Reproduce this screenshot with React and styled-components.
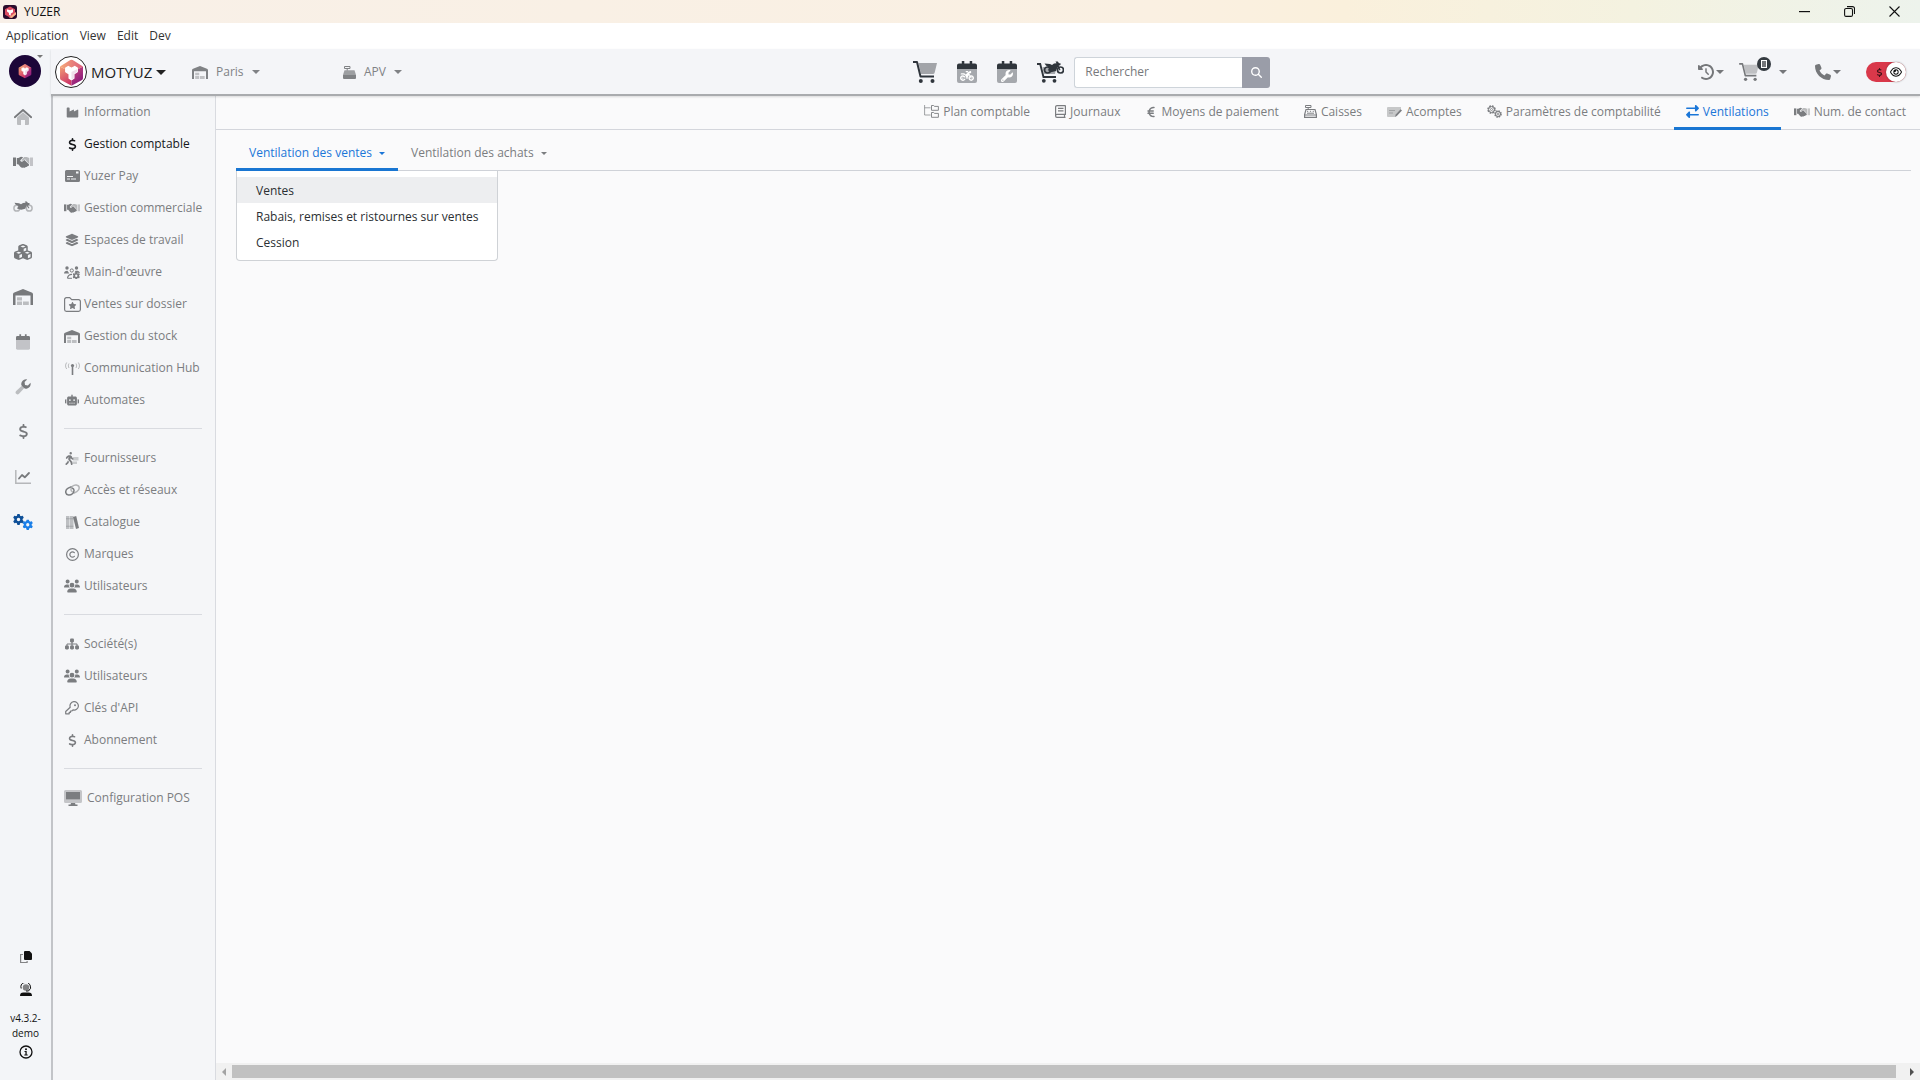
import React, { useState } from "react";
import styled, { createGlobalStyle, css } from "styled-components";
import {
  FaCubes, FaDollarSign, FaGear, FaIndustry, FaLayerGroup, FaRobot, FaRegCopyright,
  FaSitemap, FaEuroSign, FaRightLeft, FaClockRotateLeft, FaPhone, FaMotorcycle,
  FaWrench, FaMagnifyingGlass, FaUsers, FaPersonWalking, FaStar, FaRegEye,
} from "react-icons/fa6";

const BLUE = "#1976d2";
const GREY = "#7b7d80";

const Global = createGlobalStyle`
  *, *::before, *::after { box-sizing: border-box; }
  body {
    margin: 0;
    background: #fafafb;
    color: #212529;
    font-family: "Open Sans", "Noto Sans", sans-serif;
    font-size: 12px;
    line-height: 20px;
  }
  button, input { font: inherit; color: inherit; }
  button { border: 0; padding: 0; background: none; cursor: pointer; }
  a { color: inherit; text-decoration: none; }
  ul { list-style: none; margin: 0; padding: 0; }
  svg { display: block; flex: none; }
`;

/* ---------- drawings ---------- */

const Svg = ({ w, h = w, box = `0 0 ${w} ${h}`, children }) => (
  <svg width={w} height={h} viewBox={box} fill="currentColor" aria-hidden="true">{children}</svg>
);

const Hex = ({ size, id }) => (
  <svg width={size} height={size} viewBox="0 0 24 24" aria-hidden="true">
    <defs>
      <linearGradient id={`${id}Left`} x1="0" y1="0" x2="0.400" y2="1">
        <stop offset="0" stopColor="#f3a073" />
        <stop offset="1" stopColor="#cf3a68" />
      </linearGradient>
      <linearGradient id={`${id}Right`} x1="0" y1="0" x2="0.600" y2="1">
        <stop offset="0" stopColor="#d44f7c" />
        <stop offset="1" stopColor="#86187c" />
      </linearGradient>
      <linearGradient id={`${id}Top`} x1="0" y1="0" x2="1" y2="0">
        <stop offset="0" stopColor="#f5a878" />
        <stop offset="1" stopColor="#dd5f7c" />
      </linearGradient>
    </defs>
    <path d="M2.500 7 12 12v11L3.300 18.200a1.600 1.600 0 0 1-.8-1.400z" fill={`url(#${id}Left)`} />
    <path d="M21.500 7 12 12v11l8.700-4.800a1.600 1.600 0 0 0 .8-1.400z" fill={`url(#${id}Right)`} />
    <path d="M2.500 7 11 1.700a2 2 0 0 1 2 0L21.500 7 12 12.200z" fill={`url(#${id}Top)`} />
    <path d="M7.200 8.200 9.300 7l2.700 1.500L14.700 7l2.100 1.200v3.200L14 13.200v3.600L12 18l-2-1.200v-3.600l-2.800-1.800z" fill="#fff" stroke="#fff" strokeLinejoin="round" />
    <path d="M12 11.500V18l2-1.200v-3.600l2.800-1.800V9z" fill="#f0e0ea" />
  </svg>
);

const AppLogo = () => (
  <svg width="14" height="14" viewBox="0 0 14 14" aria-hidden="true">
    <rect width="14" height="14" rx="3" fill="#2a0c2c" />
    <path d="M7 1.500 12 4.300v5.400l-5 2.800-5-2.800V4.300z" fill="#dc4c62" />
    <path d="M4 4.200 7 5.200l3-1v3L7.800 8.500v2.200L6 9.800V8L4 6.600z" fill="#fff" />
    <path d="M6 12.500 13 7v2.500L9 13z" fill="#f6b08a" />
  </svg>
);

const Home = () => (
  <Svg w={18} h={16}>
    <path d="M3 8.500 9 3.300l6 5.200V15a1 1 0 0 1-1 1h-3v-5H7v5H4a1 1 0 0 1-1-1z" opacity=".45" />
    <path d="M.8 8.200 9 1l8.200 7.200" fill="none" stroke="currentColor" strokeWidth="1.800" strokeLinecap="round" strokeLinejoin="round" />
  </Svg>
);

const Handshake = ({ w = 20 }) => (
  <Svg w={w} h={Math.round(w * 0.6)} box="0 0 20 12">
    <path d="M0 1.500h3V10H0z" />
    <path d="M17 1.500h3V10h-3z" opacity=".4" />
    <path d="M3.800 2h1.500L8 .7l2.200.6-2.900 3c-.2 1.200 1.700 2 3 .6l1.200-1 4.300 4.300c.7 1-.2 2-1.100 1.900-.4.900-1.300 1.200-2 .8-.7 1-1.800 1-2.500.6-1 .6-1.900.2-2.600-.4L5.200 8.200H3.800z" />
    <path d="M8.500 4 11.300 1l2.400.1 2.600.8v6.300L12 3.200l-1.800 1.500c-.900.4-1.900 0-1.700-.7z" opacity=".5" />
  </Svg>
);

const Moto = () => (
  <Svg w={20} h={11}>
    <g fill="none" stroke="currentColor" strokeWidth="1.500" opacity=".5">
      <circle cx="3.800" cy="7.200" r="2.900" />
      <circle cx="16.200" cy="7.200" r="2.900" />
    </g>
    <path d="M1.500 1.800 6 2.300l2 1 2-1.300 2.600-.3-.8-1.200h2l1.200 1.500h1.500v1.800l-1.800.6L16.500 7l-.9.500-2-3-1.400 3.300-4 1L4 7.500 5.500 5 2.500 3.600z" />
  </Svg>
);

const Warehouse = ({ w = 20 }) => (
  <Svg w={w} h={Math.round(w * 0.8)} box="0 0 20 16">
    <path d="M0 16V5.300C0 4.400.5 3.700 1.300 3.400L10 0l8.700 3.400c.8.300 1.300 1 1.300 1.900V16h-2.500V6.500h-15V16z" />
    <path d="M4 8.200h5v3.300H4zM4 12.500h5V16H4zM10 12.500h5.800V16H10z" opacity=".45" />
  </Svg>
);

const Calendar = ({ w = 14, h = 16, children }) => (
  <Svg w={w} h={h} box="0 0 20 22">
    <path d="M0 8h20v12a2 2 0 0 1-2 2H2a2 2 0 0 1-2-2z" opacity=".4" />
    <path d="M2 2.500h2.800V0h2.500v2.500h5.400V0h2.500v2.500H18a2 2 0 0 1 2 2V8H0V4.500a2 2 0 0 1 2-2z" />
    {children}
  </Svg>
);

const Wrench = () => (
  <Svg w={16}>
    <path d="M7.400 6.200 9.800 8.600 4 14.800a1.900 1.900 0 0 1-2.800-2.800z" opacity=".45" />
    <path d="M15.500 3.800 12.900 6.400 10 6 9.600 3.100 12.200.5A4.800 4.800 0 0 0 6.400 6.300L9.700 9.600a4.800 4.800 0 0 0 5.800-5.800z" />
  </Svg>
);

const Chart = () => (
  <Svg w={16} h={14}>
    <path d="M.800 0v13.200H16" fill="none" stroke="currentColor" strokeWidth="1.500" opacity=".5" />
    <path d="m4 8.500 3-3.500 2.800 2.300L14 3" fill="none" stroke="currentColor" strokeWidth="1.800" strokeLinecap="round" strokeLinejoin="round" />
  </Svg>
);

const Gears = () => (
  <svg width="20" height="16" viewBox="0 0 20 16" aria-hidden="true">
    <FaGear x="0" y="0" size="11" color="#0d4f98" />
    <FaGear x="9.500" y="5.500" size="10.500" color="#1a7fe8" />
  </svg>
);

const GearsLine = () => (
  <Svg w={15} h={13}>
    <g fill="none" stroke="currentColor">
      <circle cx="4.500" cy="4.500" r="3.400" strokeWidth="1.800" strokeDasharray="1.700 .97" />
      <circle cx="4.500" cy="4.500" r="2.900" />
      <circle cx="4.500" cy="4.500" r="1" strokeWidth=".8" />
      <circle cx="11" cy="9" r="3" strokeWidth="1.600" strokeDasharray="1.500 .86" />
      <circle cx="11" cy="9" r="2.500" />
      <circle cx="11" cy="9" r=".9" strokeWidth=".8" />
    </g>
  </Svg>
);

const Card = () => (
  <Svg w={15} h={12}>
    <path fillRule="evenodd" d="M1.500 0h12A1.500 1.500 0 0 1 15 1.500v9a1.500 1.500 0 0 1-1.500 1.500h-12A1.500 1.500 0 0 1 0 10.500v-9A1.500 1.500 0 0 1 1.500 0zM11 1.500v2h2.500v-2zM2 6v1h6V6zm0 2.500v1h3v-1zm4 0v1h5v-1z" />
  </Svg>
);

const Staff = () => (
  <Svg w={16} h={13}>
    <circle cx="3" cy="2" r="1.700" /><circle cx="12.500" cy="2" r="1.700" />
    <circle cx="7.800" cy="4.500" r="1.600" fill="none" stroke="currentColor" />
    <path d="M0 7.500C.2 5.300 1.500 4.600 3.500 4.700L5.300 7.500zM10.500 6.500l1-1.700c2-.3 4 .2 4.500 2.200z" />
    <path d="M3.500 12.300c.3-3 1.500-4 4.500-4" fill="none" stroke="currentColor" strokeWidth="1.200" />
    <path d="M3.500 12.300H8" stroke="currentColor" />
    <FaGear x="8.500" y="6" size="7.500" />
  </Svg>
);

const FolderStar = () => (
  <Svg w={17} h={15}>
    <path d="M.6 12.500v-10A1.800 1.800 0 0 1 2.400.700h3.300l2 2h6.900a1.800 1.800 0 0 1 1.800 1.800v8a1.800 1.800 0 0 1-1.800 1.800H2.400a1.800 1.800 0 0 1-1.800-1.800z" fill="none" stroke="currentColor" strokeWidth="1.200" />
    <FaStar x="4.500" y="4.500" size="8" />
  </Svg>
);

const Antenna = () => (
  <Svg w={15} h={13}>
    <g fill="none" stroke="currentColor" opacity=".5">
      <path d="M1.700.5C.2 2.500.2 5 1.700 7M13.300.5c1.500 2 1.500 4.500 0 6.500M4 1.500c-.8 1.500-.8 3 0 4.500M11 1.500c.8 1.500.8 3 0 4.500" />
    </g>
    <circle cx="7.500" cy="3.500" r="1.600" /><path d="M6.700 4h1.600v9H6.700z" />
  </Svg>
);

const Supplier = () => (
  <svg width="14" height="13" viewBox="0 0 14 13" fill="currentColor" aria-hidden="true">
    <FaPersonWalking x="-2" y="0" size="13" />
    <path d="M8 5h5.500v3.500H8zM7 9.500h5V12H7z" opacity=".35" />
  </svg>
);

const LinkIcon = () => (
  <Svg w={15} h={12}>
    <g fill="none" stroke="currentColor" strokeWidth="1.500" strokeLinecap="round">
      <path d="M6 2.800 3.200 4.200C-.2 6-.2 10.500 3.500 11c3 .3 5.700-2.200 5.500-4.800-.1-1-.7-1.700-1.500-2" />
      <path d="M9 9.200 11.800 7.600c3.400-2 3.200-6.100-.5-6.600-3-.3-5.500 2.200-5.300 4.800.1 1 .5 1.500 1.200 1.800" opacity=".55" />
    </g>
  </Svg>
);

const Books = () => (
  <Svg w={13}>
    <path d="M0 0h3.500v13H0zM4 0h3.500v13H4z" opacity=".45" />
    <path d="M0 2.300h7.500v1H0zM0 9.700h7.500v1H0z" opacity=".4" />
    <path d="m7 1 3.200-.900L13 12l-3 .900z" />
  </Svg>
);

const Key = () => (
  <Svg w={14} h={14}>
    <path d="M5.200 6.200A4.200 4.200 0 1 1 8 8.900L6.800 10H5.500v1.300H4.200v1.500H.7v-2.300z" fill="none" stroke="currentColor" strokeWidth="1.200" strokeLinejoin="round" />
    <circle cx="10" cy="4.200" r="1" />
  </Svg>
);

const Desktop = () => (
  <Svg w={18} h={16}>
    <path fillRule="evenodd" d="M1.500 0h15A1.500 1.500 0 0 1 18 1.500v10a1.500 1.500 0 0 1-1.500 1.500h-15A1.500 1.500 0 0 1 0 11.500v-10A1.500 1.500 0 0 1 1.500 0zM2 2v7.500h14V2z" opacity=".4" />
    <path d="M2 2h14v7.500H2zM7 13h4l.5 1.500h2V16h-9v-1.500h2z" />
  </Svg>
);

const FolderTree = () => (
  <Svg w={15} h={13}>
    <path d="M.6 0v10h6M.6 2.800h6" fill="none" stroke="currentColor" opacity=".7" />
    <path d="M7.500.500h2.200l.9.900h3.800v3.900H7.500zM7.500 7.500h2.200l.9.900h3.800v3.900H7.500z" fill="none" stroke="currentColor" strokeWidth=".9" />
  </Svg>
);

const Journal = () => (
  <Svg w={11} h={13}>
    <path d="M10.500.600H2A1.400 1.400 0 0 0 .6 2v9A1.400 1.400 0 0 0 2 12.400h8.500M.600 10.500C.6 9.700 1.200 9.300 2 9.300h8.400V.6M9.500 9.500v3M3 3.300h5.500M3 5.800h5.500" fill="none" stroke="currentColor" strokeWidth="1.200" />
  </Svg>
);

const Register = ({ solid }) => (
  <Svg w={13} h={13}>
    <path d="M1.500.5H7v2H1.500zM4.200 2.500v2" fill="none" stroke="currentColor" />
    {solid ? (
      <><path d="M1.500 4.200h10L13 9H0z" opacity=".75" /><path d="M0 9h13v3a1 1 0 0 1-1 1H1a1 1 0 0 1-1-1z" /></>
    ) : (
      <><path d="M2 4.500h9l1.400 5v2.900H.6V9.500z" fill="none" stroke="currentColor" strokeWidth="1.200" /><path d="M.6 10h12M3 6.300h1.200M5.900 6.300h1.200M8.700 6.300h1.200M3 8.200h7" stroke="currentColor" /></>
    )}
  </Svg>
);

const Cheque = () => (
  <Svg w={15} h={12}>
    <path d="M1 1h13v2.500L9 8.500 8 11H1a1 1 0 0 1-1-1V2a1 1 0 0 1 1-1z" opacity=".4" />
    <path d="M2 4.500h6M2 7h4" stroke="currentColor" opacity=".5" />
    <path d="m13.600 3.200 1.400 1.300-5.200 5.600L8 11l.5-2.200z" />
  </Svg>
);

const Cart = ({ w = 24, h = 22 }) => (
  <Svg w={w} h={h} box="0 0 24 22">
    <path d="M5.500 2H24l-2.300 9.500a2 2 0 0 1-2 1.500H8z" opacity=".42" />
    <path d="M0 1h4l3.500 14.500H21" fill="none" stroke="currentColor" strokeWidth="2" strokeLinejoin="round" />
    <circle cx="7.800" cy="20" r="2" /><circle cx="19.500" cy="20" r="2" />
  </Svg>
);

const CartMoto = () => (
  <Svg w={27} h={22}>
    <path d="M0 3h3.200L6.500 16H19" fill="none" stroke="currentColor" strokeWidth="1.900" />
    <path d="M5.500 6h14l-1.500 7H7z" opacity=".4" />
    <circle cx="6.800" cy="19.800" r="1.900" /><circle cx="17.500" cy="19.800" r="1.900" />
    <g fill="none" stroke="currentColor" strokeWidth="1.700">
      <circle cx="10.500" cy="9" r="3" /><circle cx="23.500" cy="9" r="3" />
    </g>
    <path d="M7.500 2.500 13 3l2 1 2-1.500 2.500-.3L18.500.5h2.300l1.200 1.700h1.500V4l-1.800.7L23.500 9l-1 .5-2-3.200-1.500 3.700-5 1.200-3-2L12 6.500 9 4.500z" />
  </Svg>
);

const CopyIcon = () => (
  <Svg w={12}>
    <path d="M3 3.500H.600v8h6.500V10" fill="none" stroke="currentColor" strokeWidth="1.200" opacity=".5" />
    <path d="M5 0h4.500L12 2.500V8a1 1 0 0 1-1 1H5a1 1 0 0 1-1-1V1a1 1 0 0 1 1-1z" />
  </Svg>
);

const Agent = () => (
  <Svg w={12} h={13}>
    <circle cx="6" cy="4.500" r="3.200" opacity=".5" />
    <path d="M1.200 5.500A4.800 4.800 0 1 1 8.500 8H6" fill="none" stroke="currentColor" />
    <path d="M0 13c0-2.500 1-3.500 3.500-3.500h5C11 9.500 12 10.500 12 13z" />
  </Svg>
);

const Info = () => (
  <Svg w={14}>
    <circle cx="7" cy="7" r="6" fill="none" stroke="currentColor" strokeWidth="1.300" />
    <circle cx="7" cy="4.200" r="1" /><path d="M5.500 6h2.200v3.500h1v1H5.300v-1h1.100V7h-.9z" />
  </Svg>
);

const Caret = styled.span`
  flex: none;
  width: 0;
  height: 0;
  border: solid transparent;
  border-width: ${(p) => p.$s || 5}px ${(p) => p.$s || 5}px 0;
  border-top-color: currentColor;
`;

/* ---------- window chrome ---------- */

const Window = styled.div`
  display: flex;
  flex-direction: column;
  height: 100vh;
`;

const TitleBar = styled.header`
  display: flex;
  align-items: center;
  gap: 7px;
  height: 23px;
  padding-left: 3px;
  color: #111;
  background: linear-gradient(90deg, #f8f0e8 0%, #faf0e2 60%, #faf0dc 70%, #f4f2e0 85%, #edf3ec 100%);
`;

const WindowButtons = styled.div`
  display: flex;
  margin-left: auto;
  padding-right: 3px;
`;

const WindowButton = styled.button`
  display: grid;
  place-items: center;
  width: 45px;
  height: 21px;
`;

const MenuBar = styled.nav`
  display: flex;
  align-items: center;
  gap: 11px;
  height: 26px;
  padding: 0 6px;
  background: #fff;
  color: #333;
`;

const Body = styled.div`
  display: flex;
  flex: 1;
  min-height: 0;
`;

/* ---------- icon rail ---------- */

const Rail = styled.nav`
  display: flex;
  flex-direction: column;
  width: 51px;
  background: #f3f5f8;
  color: #77797c;
`;

const Profile = styled.button`
  position: relative;
  display: grid;
  place-items: center;
  width: 32px;
  height: 32px;
  margin: 6px 0 7px 9px;
  border-radius: 50%;
  background: #1c0638;
`;

const ProfileCaret = styled(Caret)`
  position: absolute;
  top: 0;
  right: -2px;
  color: #777;
`;

const RailLink = styled.a`
  display: grid;
  place-items: center;
  width: 46px;
  height: 45px;
`;

const RailFoot = styled.div`
  display: flex;
  flex-direction: column;
  align-items: center;
  margin-top: auto;
  padding-bottom: 17px;
  color: #111;
`;

const FootButton = styled.button`
  display: grid;
  place-items: center;
  height: ${(p) => p.$h || 32}px;
`;

const Version = styled.span`
  width: 40px;
  padding-top: 6px;
  font-size: 10px;
  line-height: 15px;
  text-align: center;
`;

/* ---------- header ---------- */

const Right = styled.div`
  display: flex;
  flex-direction: column;
  flex: 1;
  min-width: 0;
`;

const Header = styled.div`
  position: relative;
  display: grid;
  grid-template-columns: 4fr auto 3fr;
  align-items: center;
  height: 47px;
  padding-top: 1px;
  background: #f4f5f8;
  border-bottom: 2px solid #a9abae;
  box-shadow: 0 1px 2px #0002;
`;

const Group = styled.div`
  display: flex;
  align-items: center;
`;

const Picker = styled.button`
  display: flex;
  align-items: center;
  gap: 8px;
  min-width: ${(p) => p.$w || 0}px;
  color: #808285;
`;

const Company = styled(Picker)`
  gap: 4px;
  padding-left: 4px;
  color: #222;
  font-size: 15px;
`;

const CompanyLogo = styled.span`
  display: grid;
  place-items: center;
  width: 32px;
  height: 32px;
  border: 1px solid #222;
  border-radius: 50%;
  background: #fff;
`;

const Shortcuts = styled(Group)`
  gap: 20px;
  padding-right: 3px;
  color: #2f353c;
`;

const Search = styled.form`
  display: flex;
  height: 31px;
  margin-left: -10px;
`;

const SearchInput = styled.input`
  width: 168px;
  padding: 0 10px;
  border: 1px solid #ced4da;
  border-right: 0;
  border-radius: 3px 0 0 3px;
  background: #fff;
  outline: 0;
  &::placeholder { color: #77797c; opacity: 1; }
`;

const SearchButton = styled.button`
  display: grid;
  place-items: center;
  width: 28px;
  border-radius: 0 3px 3px 0;
  background: #9a9da8;
  color: #fff;
`;

const Tools = styled(Group)`
  justify-content: flex-end;
  padding-right: 14px;
  color: #75777a;
`;

const Tool = styled.button`
  position: relative;
  display: flex;
  align-items: center;
  gap: ${(p) => p.$gap || 2}px;
  margin-right: ${(p) => p.$mr}px;
`;

const Badge = styled.span`
  position: absolute;
  top: -6px;
  left: 18px;
  display: grid;
  place-items: center;
  width: 14px;
  height: 14px;
  border-radius: 50%;
  background: #343a40;
`;

const Toggle = styled.label`
  display: flex;
  align-items: center;
  justify-content: space-between;
  width: 40px;
  height: 20px;
  padding-left: 9px;
  border-radius: 10px;
  background: #d9384a;
  color: #3a1216;
  cursor: pointer;
  input { position: absolute; opacity: 0; pointer-events: none; }
`;

const Knob = styled.span`
  display: grid;
  place-items: center;
  width: 20px;
  height: 20px;
  border-radius: 50%;
  background: #fff;
  color: #111;
  box-shadow: 0 0 2px #0006;
`;

/* ---------- side menu ---------- */

const Content = styled.div`
  display: flex;
  flex: 1;
  min-height: 0;
`;

const Side = styled.nav`
  width: 165px;
  padding: 1px 13px 0 11px;
  border-left: 2px solid #c2c4c8;
  border-right: 1px solid #d9dbe0;
  background: #f5f6f8;
`;

const SideList = styled.ul`
  display: flex;
  flex-direction: column;
  gap: 2px;
  & + & { margin-top: 13px; padding-top: 14px; border-top: 1px solid #d9dbe0; }
`;

const SideLink = styled.a`
  display: flex;
  align-items: center;
  gap: ${(p) => (p.$wide ? 5 : 4)}px;
  height: 30px;
  white-space: nowrap;
  color: ${(p) => (p.$active ? "#16181b" : GREY)};
`;

const SideIcon = styled.span`
  display: grid;
  place-items: center;
  width: ${(p) => (p.$wide ? 18 : 16)}px;
`;

/* ---------- main ---------- */

const Main = styled.main`
  display: flex;
  flex-direction: column;
  flex: 1;
  min-width: 0;
  background: #fafafb;
`;

const Tabs = styled.nav`
  display: flex;
  justify-content: flex-end;
  gap: 1px;
  height: 34px;
  padding-right: 2px;
  border-bottom: 1px solid #d4d6dc;
`;

const activeTab = css`
  color: #1a76d8;
  border-bottom-color: ${BLUE};
`;

const Tab = styled.a`
  display: flex;
  align-items: center;
  gap: 4px;
  height: 34px;
  padding: 0 12px;
  border-bottom: 3px solid transparent;
  color: ${GREY};
  white-space: nowrap;
  ${(p) => p.$active && activeTab}
`;

const SubTabs = styled.nav`
  display: flex;
  height: 41px;
  margin: 0 9px 0 20px;
  border-bottom: 1px solid #cfd2d8;
`;

const SubItem = styled.div`
  position: relative;
`;

const SubTab = styled.button`
  display: flex;
  align-items: center;
  gap: 7px;
  height: 41px;
  padding: 8px 13px 0;
  border-bottom: 3px solid transparent;
  color: ${GREY};
  white-space: nowrap;
  ${(p) => p.$active && activeTab}
`;

const Menu = styled.ul`
  position: absolute;
  top: 41px;
  left: 0;
  padding: 6px 0 5px;
  border: 1px solid #cfd2d6;
  border-top: 0;
  border-radius: 0 0 4px 4px;
  background: #fff;
`;

const MenuLink = styled.a`
  display: block;
  height: 26px;
  padding: 1px 18px 0 19px;
  line-height: 26px;
  white-space: nowrap;
  color: #2b2f33;
  background: ${(p) => (p.$active ? "#edeef0" : "transparent")};
`;

const ScrollTrack = styled.div`
  display: flex;
  align-items: center;
  justify-content: space-between;
  height: 17px;
  margin-top: auto;
  background: #f1f1f1;
`;

const ScrollThumb = styled.div`
  flex: 1;
  height: 13px;
  margin-right: 8px;
  background: #c1c1c1;
`;

const ScrollButton = styled.button`
  display: grid;
  place-items: center;
  width: 16px;
  height: 17px;
  color: ${(p) => p.$color};
`;

/* ---------- data ---------- */

const railItems = [
  ["Accueil", <Home />], ["Ventes", <Handshake />], ["Véhicules", <Moto />],
  ["Pièces", <FaCubes size={18} />], ["Entrepôt", <Warehouse />], ["Agenda", <Calendar />],
  ["Atelier", <Wrench />], ["Finances", <FaDollarSign size={15} />], ["Statistiques", <Chart />],
  ["Paramètres", <Gears />],
];

const sideGroups = [
  [
    ["Information", <FaIndustry size={13} />], ["Gestion comptable", <FaDollarSign size={13} />],
    ["Yuzer Pay", <Card />], ["Gestion commerciale", <Handshake w={16} />],
    ["Espaces de travail", <FaLayerGroup size={14} />], ["Main-d'œuvre", <Staff />],
    ["Ventes sur dossier", <FolderStar />], ["Gestion du stock", <Warehouse w={16} />],
    ["Communication Hub", <Antenna />], ["Automates", <FaRobot size={14} />],
  ],
  [
    ["Fournisseurs", <Supplier />], ["Accès et réseaux", <LinkIcon />], ["Catalogue", <Books />],
    ["Marques", <FaRegCopyright size={13} />], ["Utilisateurs", <FaUsers size={16} />],
  ],
  [
    ["Société(s)", <FaSitemap size={14} />], ["Utilisateurs", <FaUsers size={16} />],
    ["Clés d'API", <Key />], ["Abonnement", <FaDollarSign size={13} />],
  ],
  [["Configuration POS", <Desktop />, true]],
];

const tabs = [
  ["Plan comptable", <FolderTree />], ["Journaux", <Journal />], ["Moyens de paiement", <FaEuroSign size={12} />],
  ["Caisses", <Register />], ["Acomptes", <Cheque />], ["Paramètres de comptabilité", <GearsLine />],
  ["Ventilations", <FaRightLeft size={13} />], ["Num. de contact", <Handshake w={16} />],
];

export default function App() {
  const [safe, setSafe] = useState(true);
  return (
    <>
      <Global />
      <Window>
        <TitleBar>
          <AppLogo />
          YUZER
          <WindowButtons>
            <WindowButton aria-label="Réduire"><Svg w={11}><path d="M0 5h11v1.200H0z" /></Svg></WindowButton>
            <WindowButton aria-label="Restaurer">
              <Svg w={11}><path d="M.600 4a1.500 1.500 0 0 1 1.500-1.500H7A1.500 1.500 0 0 1 8.500 4v5A1.500 1.500 0 0 1 7 10.400H2A1.500 1.500 0 0 1 .6 9zM3 .600h5.500a2 2 0 0 1 2 2V8" fill="none" stroke="currentColor" strokeWidth="1.100" /></Svg>
            </WindowButton>
            <WindowButton aria-label="Fermer"><Svg w={11}><path d="m.500.500 10 10m0-10-10 10" stroke="currentColor" strokeWidth="1.100" /></Svg></WindowButton>
          </WindowButtons>
        </TitleBar>
        <MenuBar>
          {["Application", "View", "Edit", "Dev"].map((m) => <button key={m}>{m}</button>)}
        </MenuBar>
        <Body>
          <Rail>
            <Profile aria-label="Profil"><Hex size={16} id="hexProfile" /><ProfileCaret $s={3} /></Profile>
            {railItems.map(([name, icon]) => <RailLink key={name} href="#" aria-label={name}>{icon}</RailLink>)}
            <RailFoot>
              <FootButton aria-label="Copier"><CopyIcon /></FootButton>
              <FootButton aria-label="Assistance"><Agent /></FootButton>
              <Version>v4.3.2-demo</Version>
              <FootButton $h={22} aria-label="À propos"><Info /></FootButton>
            </RailFoot>
          </Rail>
          <Right>
            <Header>
              <Group>
                <Company $w={141}>
                  <CompanyLogo><Hex size={29} id="hexCompany" /></CompanyLogo>
                  MOTYUZ
                  <Caret />
                </Company>
                <Picker $w={151}><Warehouse w={16} />Paris<Caret $s={4} /></Picker>
                <Picker><Register solid />APV<Caret $s={4} /></Picker>
              </Group>
              <Shortcuts>
                <button aria-label="Panier"><Cart /></button>
                <button aria-label="Agenda véhicules">
                  <Calendar w={20} h={22}><FaMotorcycle x="3" y="8" size="14" color="#fff" /></Calendar>
                </button>
                <button aria-label="Agenda atelier">
                  <Calendar w={20} h={22}><FaWrench x="4" y="9" size="12" color="#fff" /></Calendar>
                </button>
                <button aria-label="Vente véhicule"><CartMoto /></button>
                <Search onSubmit={(e) => e.preventDefault()}>
                  <SearchInput aria-label="Rechercher" placeholder="Rechercher" />
                  <SearchButton aria-label="Lancer la recherche"><FaMagnifyingGlass size={11} /></SearchButton>
                </Search>
              </Shortcuts>
              <Tools>
                <Tool $mr={15} aria-label="Historique"><FaClockRotateLeft size={16} /><Caret $s={4} /></Tool>
                <Tool $gap={20} $mr={28} aria-label="Commandes">
                  <Cart w={20} h={18} />
                  <Badge><Svg w={6} h={8}><path d="M0 0h6v8H0z" fill="#fff" /><path d="M1 1h4v6H1z" /></Svg></Badge>
                  <Caret $s={4} />
                </Tool>
                <Tool $mr={25} aria-label="Téléphone"><FaPhone size={16} /><Caret $s={4} /></Tool>
                <Toggle>
                  <input type="checkbox" aria-label="Mode discret" checked={safe} onChange={() => setSafe(!safe)} />
                  <FaDollarSign size={9} />
                  <Knob><FaRegEye size={12} /></Knob>
                </Toggle>
              </Tools>
            </Header>
            <Content>
              <Side>
                {sideGroups.map((group, i) => (
                  <SideList key={i}>
                    {group.map(([name, icon, wide]) => (
                      <li key={name}>
                        <SideLink href="#" $wide={wide} $active={name === "Gestion comptable"}>
                          <SideIcon $wide={wide}>{icon}</SideIcon>
                          {name}
                        </SideLink>
                      </li>
                    ))}
                  </SideList>
                ))}
              </Side>
              <Main>
                <Tabs>
                  {tabs.map(([name, icon]) => (
                    <Tab key={name} href="#" $active={name === "Ventilations"}>{icon}{name}</Tab>
                  ))}
                </Tabs>
                <SubTabs>
                  <SubItem>
                    <SubTab $active aria-expanded="true">Ventilation des ventes<Caret $s={3} /></SubTab>
                    <Menu>
                      <li><MenuLink href="#" $active>Ventes</MenuLink></li>
                      <li><MenuLink href="#">Rabais, remises et ristournes sur ventes</MenuLink></li>
                      <li><MenuLink href="#">Cession</MenuLink></li>
                    </Menu>
                  </SubItem>
                  <SubItem>
                    <SubTab>Ventilation des achats<Caret $s={3} /></SubTab>
                  </SubItem>
                </SubTabs>
                <ScrollTrack>
                  <ScrollButton $color="#a3a3a3" aria-label="Défiler à gauche"><Svg w={4} h={8}><path d="M4 0v8L0 4z" /></Svg></ScrollButton>
                  <ScrollThumb />
                  <ScrollButton $color="#505050" aria-label="Défiler à droite"><Svg w={4} h={8}><path d="M0 0v8l4-4z" /></Svg></ScrollButton>
                </ScrollTrack>
              </Main>
            </Content>
          </Right>
        </Body>
      </Window>
    </>
  );
}
